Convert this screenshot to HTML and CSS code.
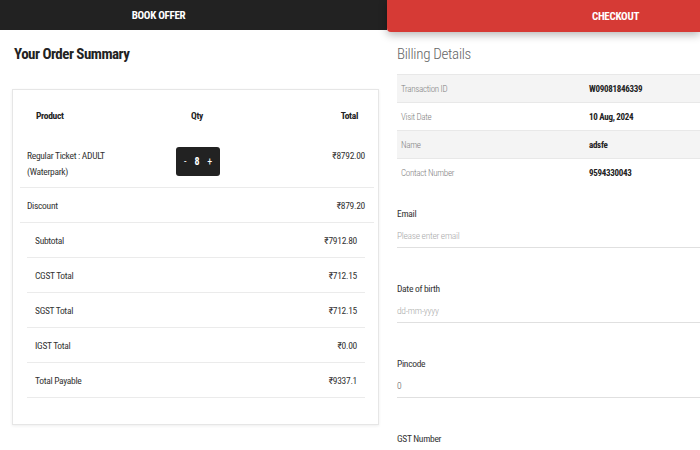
FILE: index.html
```html
<!DOCTYPE html>
<html>
<head>
<meta charset="utf-8">
<link rel="stylesheet" href="styles.css">
</head>
<body>
<div class="page">
  <div class="col left">
    <div class="bar dark">BOOK OFFER</div>
    <h1 class="title">Your Order Summary</h1>
    <div class="card">
      <div class="thead">
        <span>Product</span>
        <span>Qty</span>
        <span class="r">Total</span>
      </div>
      <div class="row main first">
        <div class="prod">Regular Ticket : ADULT<br>(Waterpark)</div>
        <div class="qty"><span>-</span><b>8</b><span>+</span></div>
        <div class="r">₹8792.00</div>
      </div>
      <div class="row main">
        <div>Discount</div>
        <div class="r">₹879.20</div>
      </div>
      <div class="row sub"><span>Subtotal</span><span>₹7912.80</span></div>
      <div class="row sub"><span>CGST Total</span><span>₹712.15</span></div>
      <div class="row sub"><span>SGST Total</span><span>₹712.15</span></div>
      <div class="row sub"><span>IGST Total</span><span>₹0.00</span></div>
      <div class="row sub"><span>Total Payable</span><span>₹9337.1</span></div>
    </div>
  </div>
  <div class="col right">
    <div class="bar red">CHECKOUT</div>
    <h2 class="billing">Billing Details</h2>
    <div class="info">
      <div class="irow shade"><span class="lbl">Transaction ID</span><span class="val">W09081846339</span></div>
      <div class="irow"><span class="lbl">Visit Date</span><span class="val">10 Aug, 2024</span></div>
      <div class="irow shade"><span class="lbl">Name</span><span class="val">adsfe</span></div>
      <div class="irow"><span class="lbl">Contact Number</span><span class="val">9594330043</span></div>
    </div>
    <div class="fields">
      <div class="field">
        <div class="flabel">Email</div>
        <div class="finput ph">Please enter email</div>
      </div>
      <div class="field">
        <div class="flabel">Date of birth</div>
        <div class="finput ph">dd-mm-yyyy</div>
      </div>
      <div class="field">
        <div class="flabel">Pincode</div>
        <div class="finput">0</div>
      </div>
      <div class="field">
        <div class="flabel">GST Number</div>
        <div class="finput"></div>
      </div>
    </div>
  </div>
</div>
</body>
</html>
```
FILE: styles.css
```css
* { box-sizing: border-box; }
body {
  margin: 0;
  font-family: "Roboto Condensed", "Roboto", sans-serif;
  font-stretch: condensed;
  letter-spacing: -0.3px;
  background: #fff;
  color: #333;
}
.page {
  display: flex;
  width: 700px;
  height: 450px;
  overflow: hidden;
}
.left { width: 387px; flex: none; }
.right { flex: 1; position: relative; z-index: 1; }

.bar {
  display: flex;
  align-items: center;
  justify-content: center;
  color: #fff;
  font-weight: bold;
  font-size: 11px;
}
.bar.dark {
  height: 30px;
  background: #222;
  padding-right: 70px;
}
.bar.red {
  height: 32px;
  background: #d63a35;
  border-bottom-left-radius: 4px;
  box-shadow: 0 3px 8px rgba(0, 0, 0, 0.28);
  padding-left: 144px;
}

.title {
  margin: 14px 0 0;
  padding-left: 14px;
  height: 20px;
  line-height: 20px;
  font-size: 15px;
  font-weight: bold;
  letter-spacing: -0.5px;
  color: #222;
}

.card {
  margin: 25px 8px 0 12px;
  height: 336px;
  border: 1px solid #e6e6e6;
  box-shadow: 0 1px 3px rgba(0, 0, 0, 0.07);
  font-size: 9.5px;
}
.thead {
  height: 50px;
  display: grid;
  grid-template-columns: 155px 1fr auto;
  align-items: center;
  padding: 0 20px 0 23px;
  font-weight: bold;
  color: #222;
}
.r { text-align: right; }

.row {
  border-bottom: 1px solid #ebebeb;
  color: #333;
}
.row.main {
  margin: 0 4px 0 7px;
  padding: 0 9px 0 7px;
  height: 35px;
  display: grid;
  grid-template-columns: 149px 44px 1fr;
  align-items: center;
}
.row.main .r { grid-column: 3; }
.row.main.first {
  height: 48px;
  align-items: start;
  padding-top: 8px;
  line-height: 16px;
}
.qty {
  margin-top: -1px;
  height: 29px;
  background: #222;
  border-radius: 3px;
  color: #fff;
  display: flex;
  align-items: center;
  justify-content: space-around;
  padding: 0 4px;
  font-size: 10px;
}
.qty b { font-weight: bold; }

.row.sub {
  margin: 0 13px 0 14px;
  padding: 0 8px;
  height: 35px;
  display: flex;
  align-items: center;
  justify-content: space-between;
}

.billing {
  margin: 12px 0 0;
  padding-left: 10px;
  height: 20px;
  line-height: 20px;
  font-size: 15px;
  font-weight: 300;
  color: #666;
}
.info {
  margin: 10px 0 0 10px;
  font-size: 9px;
}
.irow {
  height: 28px;
  display: grid;
  grid-template-columns: 188px 1fr;
  align-items: center;
  padding-left: 4px;
  border-top: 1px solid #e8e8e8;
}
.irow.shade { background: #f4f4f4; }
.lbl { color: #808080; font-weight: 300; }
.val { color: #222; font-weight: bold; }

.fields {
  padding: 21px 0 0 10px;
  font-size: 9.5px;
}
.field + .field { margin-top: 34px; }
.flabel {
  height: 14px;
  line-height: 14px;
  color: #333;
}
.finput {
  margin-top: 4px;
  height: 23px;
  line-height: 22px;
  border-bottom: 1px solid #e0e0e0;
  color: #555;
  font-weight: 300;
}
.finput.ph { color: #aaa; }
```
